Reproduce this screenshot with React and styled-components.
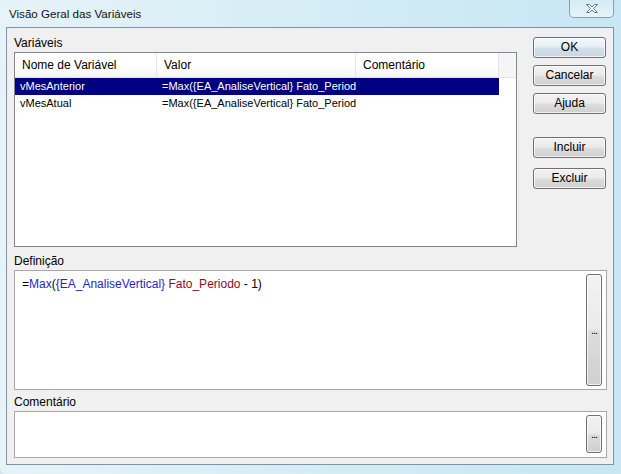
import React from 'react';
import styled, { createGlobalStyle } from 'styled-components';

const GlobalStyle = createGlobalStyle`
  html, body {
    margin: 0;
    padding: 0;
    background: #cfe6ef;
  }
  body {
    font-family: "Liberation Sans", Arial, sans-serif;
    font-size: 12px;
    color: #000;
  }
`;

const Window = styled.div`
  width: 621px;
  height: 474px;
  box-sizing: border-box;
  padding: 0 7px 9px 6px;
  display: flex;
  flex-direction: column;
  background: linear-gradient(90deg, #e6f3f8 0%, #d6edf5 45%, #c6e7f3 100%);
  border-radius: 0 0 6px 6px;
`;

const TitleBar = styled.div`
  height: 27px;
  display: flex;
  align-items: flex-start;
  justify-content: space-between;
`;

const Title = styled.div`
  padding: 7px 0 0 3px;
  font-size: 11.6px;
  line-height: 14px;
  color: #111;
`;

const CloseButton = styled.div`
  width: 45px;
  height: 18px;
  box-sizing: border-box;
  border: 1px solid #8c9eae;
  border-top: none;
  border-radius: 0 0 5px 5px;
  background: linear-gradient(180deg, rgba(255,255,255,0.2), rgba(255,255,255,0.55));
  display: flex;
  align-items: center;
  justify-content: center;
`;

const Client = styled.div`
  flex: 1;
  display: flex;
  flex-direction: column;
  background: #f0f0f0;
  border: 1px solid #7f93a6;
  padding: 8px 6px 0 7px;
`;

const TopSection = styled.div`
  display: flex;
  align-items: flex-start;
`;

const ListColumn = styled.div`
  display: flex;
  flex-direction: column;
`;

const Label = styled.div`
  height: 14px;
  line-height: 14px;
  margin-bottom: ${(p) => p.$gap || 2}px;
  margin-top: ${(p) => p.$top || 0}px;
`;

const ListBox = styled.div`
  width: 503px;
  height: 195px;
  box-sizing: border-box;
  border: 1px solid #828790;
  background: #fff;
  overflow: hidden;
`;

const HeaderRow = styled.div`
  display: grid;
  grid-template-columns: 142px 199px 143px 1fr;
  height: 24px;
  border-bottom: 1px solid #e5e5e5;
  background: linear-gradient(180deg, #ffffff 0%, #ffffff 55%, #f4f5f6 100%);
`;

const HeaderCell = styled.div`
  border-right: 1px solid #e3e6ea;
  padding-left: 7px;
  line-height: 24px;
  white-space: nowrap;
  overflow: hidden;
  &:last-child {
    border-right: none;
    background: #f5f5f5;
  }
`;

const Row = styled.div`
  display: grid;
  grid-template-columns: 142px 199px 143px;
  width: 484px;
  height: 17px;
  background: ${(p) => (p.$selected ? '#000080' : 'transparent')};
  color: ${(p) => (p.$selected ? '#fff' : '#000')};
`;

const Cell = styled.div`
  padding: 0 3px 0 5px;
  font-size: 11px;
  line-height: 17px;
  white-space: nowrap;
  overflow: hidden;
`;

const ButtonColumn = styled.div`
  display: flex;
  flex-direction: column;
  margin: 1px 0 0 16px;
`;

const Button = styled.div`
  width: 73px;
  height: 21px;
  box-sizing: border-box;
  margin-top: ${(p) => p.$gap || 0}px;
  border: 1px solid ${(p) => (p.$default ? '#3c7fb1' : '#707070')};
  border-radius: 3px;
  background: ${(p) =>
    p.$default
      ? 'linear-gradient(180deg, #f3f8fb 0%, #e6eff5 48%, #d3dfe8 52%, #c9d8e3 100%)'
      : 'linear-gradient(180deg, #f2f2f2 0%, #ebebeb 48%, #dddddd 52%, #cfcfcf 100%)'};
  box-shadow: inset 0 0 0 1px rgba(255, 255, 255, 0.7);
  text-align: center;
  line-height: 19px;
`;

const EditorBox = styled.div`
  height: ${(p) => p.$height}px;
  box-sizing: border-box;
  border: 1px solid #a7a7a7;
  background: #fff;
  display: flex;
  padding: ${(p) => p.$pad};
`;

const EditorText = styled.div`
  flex: 1;
  padding: 3px 0 0 7px;
  line-height: 14px;
  white-space: pre;
`;

const EllipsisButton = styled.div`
  width: 16px;
  box-sizing: border-box;
  border: 1px solid #707070;
  border-radius: 3px;
  background: linear-gradient(180deg, #f2f2f2 0%, #ebebeb 48%, #dddddd 52%, #cfcfcf 100%);
  box-shadow: inset 0 0 0 1px rgba(255, 255, 255, 0.7);
  display: flex;
  align-items: center;
  justify-content: center;
  font-size: 11px;
  letter-spacing: -1px;
  line-height: 10px;
`;

const Token = styled.span`
  color: ${(p) => p.$color};
`;

const CloseIcon = () => (
  <svg width="14" height="11" viewBox="0 0 14 11">
    <path
      d="M1.5 1.5 H4.5 L7 4 L9.5 1.5 H12.5 L8.5 5.5 L12.5 9.5 H9.5 L7 7 L4.5 9.5 H1.5 L5.5 5.5 Z"
      fill="#f4f8fb"
      stroke="#6b7985"
      strokeWidth="1"
      strokeLinejoin="round"
    />
  </svg>
);

const variables = [
  { name: 'vMesAnterior', value: '=Max({EA_AnaliseVertical} Fato_Periodo - 1)', comment: '' },
  { name: 'vMesAtual', value: '=Max({EA_AnaliseVertical} Fato_Periodo)', comment: '' },
];

export default function App() {
  return (
    <>
      <GlobalStyle />
      <Window>
        <TitleBar>
          <Title>Visão Geral das Variáveis</Title>
          <CloseButton>
            <CloseIcon />
          </CloseButton>
        </TitleBar>
        <Client>
          <TopSection>
            <ListColumn>
              <Label>Variáveis</Label>
              <ListBox>
                <HeaderRow>
                  <HeaderCell>Nome de Variável</HeaderCell>
                  <HeaderCell>Valor</HeaderCell>
                  <HeaderCell>Comentário</HeaderCell>
                  <HeaderCell />
                </HeaderRow>
                {variables.map((v, i) => (
                  <Row key={v.name} $selected={i === 0}>
                    <Cell>{v.name}</Cell>
                    <Cell>{v.value}</Cell>
                    <Cell>{v.comment}</Cell>
                  </Row>
                ))}
              </ListBox>
            </ListColumn>
            <ButtonColumn>
              <Button $default>OK</Button>
              <Button $gap={7}>Cancelar</Button>
              <Button $gap={7}>Ajuda</Button>
              <Button $gap={23}>Incluir</Button>
              <Button $gap={10}>Excluir</Button>
            </ButtonColumn>
          </TopSection>
          <Label $top={7}>Definição</Label>
          <EditorBox $height={120} $pad="3px 4px 3px 0">
            <EditorText>
              =<Token $color="#2626c8">Max</Token>(
              <Token $color="#2626c8">{'{EA_AnaliseVertical}'}</Token>{' '}
              <Token $color="#8b0f1e">Fato_Periodo</Token> - 1)
            </EditorText>
            <EllipsisButton>...</EllipsisButton>
          </EditorBox>
          <Label $top={5} $gap={2}>Comentário</Label>
          <EditorBox $height={47} $pad="3px 4px 4px 0">
            <EditorText />
            <EllipsisButton>...</EllipsisButton>
          </EditorBox>
        </Client>
      </Window>
    </>
  );
}
